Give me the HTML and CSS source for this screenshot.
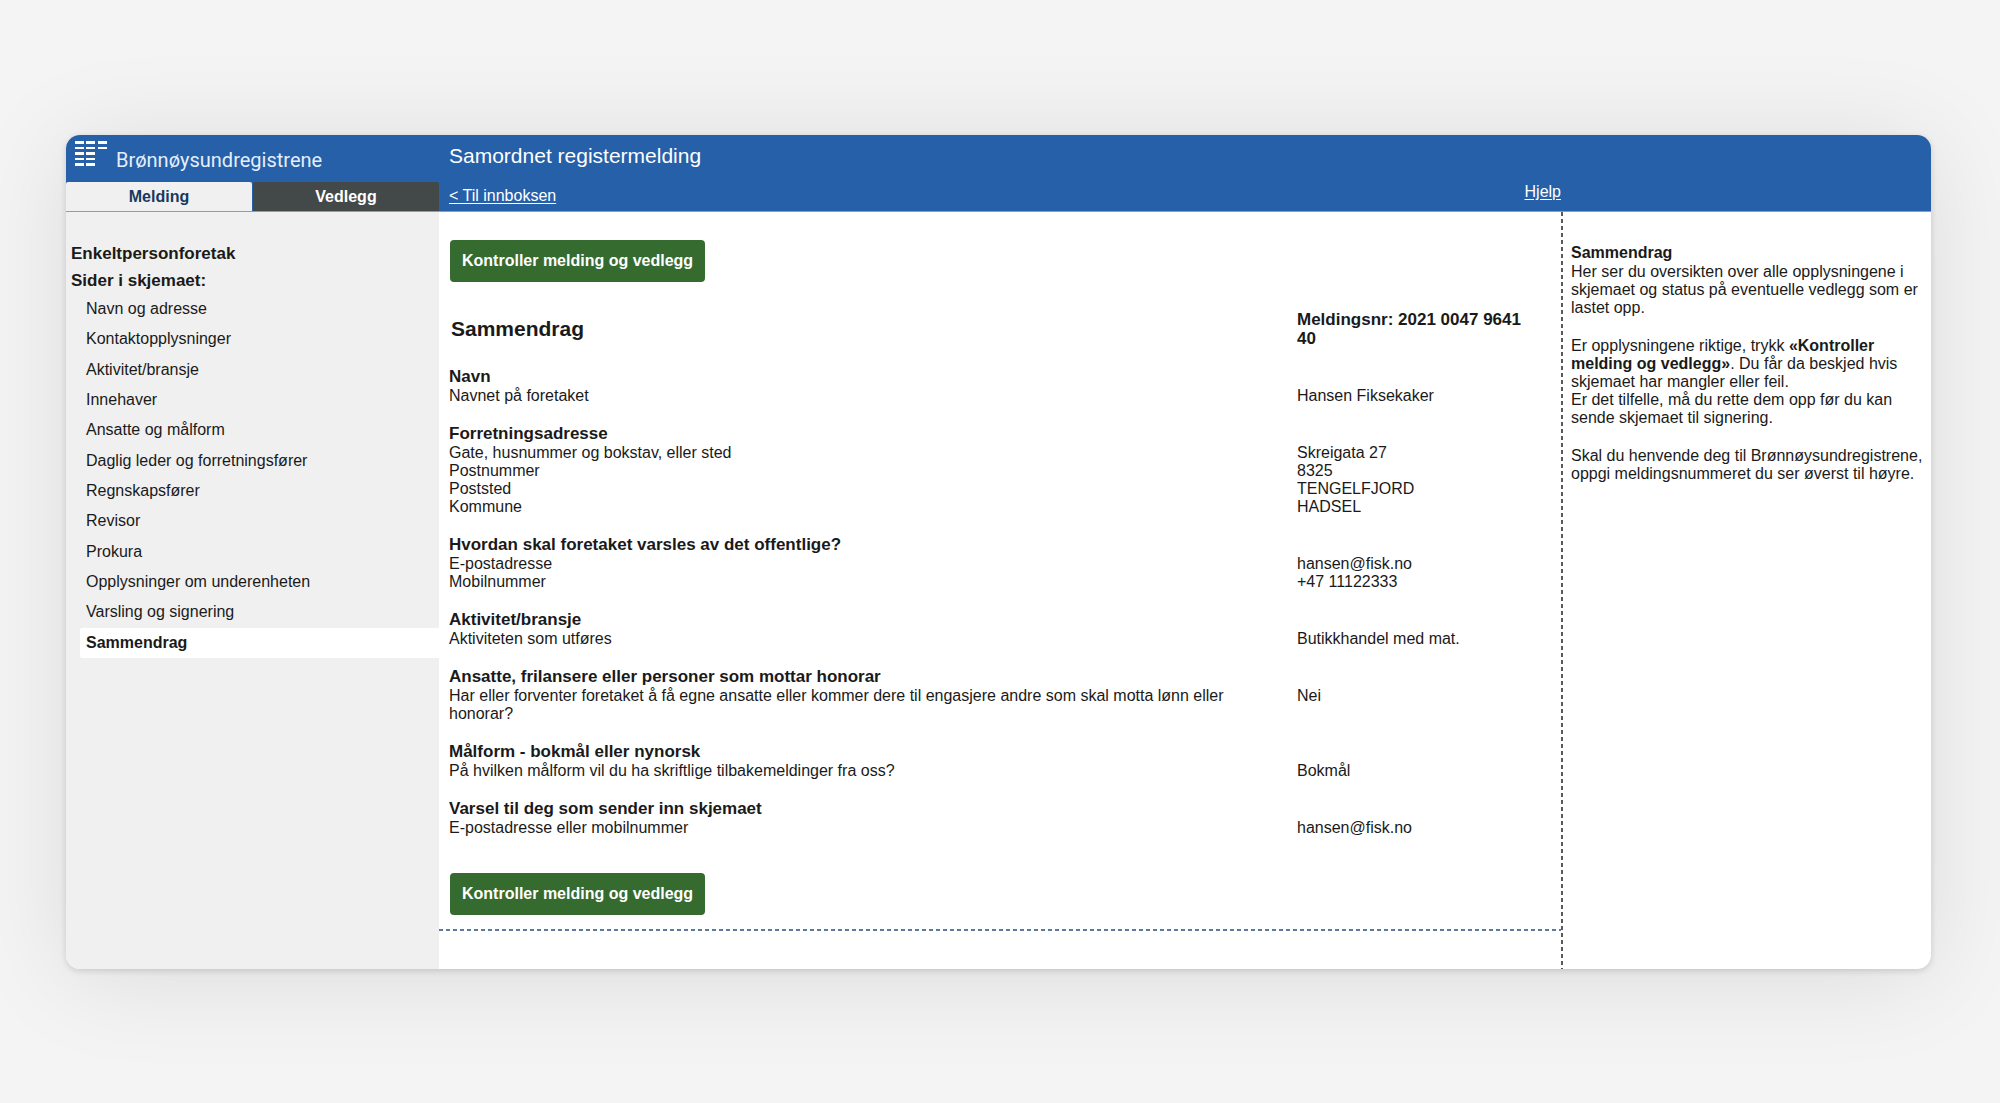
FILE: index.html
```html
<!DOCTYPE html>
<html lang="no">
<head>
    <meta charset="UTF-8">
    <meta name="viewport" content="width=device-width, initial-scale=1.0">
    <title>Samordnet registermelding</title>
    <link rel="stylesheet" href="styles.css">
</head>
<body>
    <div class="window">
        <header class="header">
            <div class="brand">
                <div class="logo">
                    <svg class="logo-mark" width="32" height="26" viewBox="0 0 32 26" fill="#fff" aria-hidden="true">
                        <path d="M0 0h9v3H0zM11 0h9v3h-9zM23 0h9v3h-9z"/>
                        <path d="M0 6h9v2H0zM11 6h9v2h-9zM23 6h9v2h-9z"/>
                        <path d="M0 11h9v3H0zM11 11h9v3h-9z"/>
                        <path d="M0 17h9v2H0zM11 17h9v2h-9z"/>
                        <path d="M0 22h9v3H0zM11 22h9v3h-9z"/>
                    </svg>
                    <span class="logo-text">Brønnøysundregistrene</span>
                </div>
                <nav class="tabs">
                    <a class="tab active" href="#melding">Melding</a>
                    <a class="tab" href="#vedlegg">Vedlegg</a>
                </nav>
            </div>
            <div class="header-main">
                <div class="form-name">Samordnet registermelding</div>
                <div class="header-links">
                    <a href="#innboks">&lt; Til innboksen</a>
                    <a class="help-link" href="#hjelp">Hjelp</a>
                </div>
            </div>
        </header>

        <div class="content">
            <nav class="sidebar">
                <h2>Enkeltpersonforetak</h2>
                <h2>Sider i skjemaet:</h2>
                <ul class="pages">
                    <li><a href="#">Navn og adresse</a></li>
                    <li><a href="#">Kontaktopplysninger</a></li>
                    <li><a href="#">Aktivitet/bransje</a></li>
                    <li><a href="#">Innehaver</a></li>
                    <li><a href="#">Ansatte og målform</a></li>
                    <li><a href="#">Daglig leder og forretningsfører</a></li>
                    <li><a href="#">Regnskapsfører</a></li>
                    <li><a href="#">Revisor</a></li>
                    <li><a href="#">Prokura</a></li>
                    <li><a href="#">Opplysninger om underenheten</a></li>
                    <li><a href="#">Varsling og signering</a></li>
                    <li class="current"><a href="#">Sammendrag</a></li>
                </ul>
            </nav>

            <main class="main">
                <div class="summary">
                    <button type="button" class="check-button">Kontroller melding og vedlegg</button>

                    <div class="title-row">
                        <h1>Sammendrag</h1>
                        <strong class="message-number">Meldingsnr: 2021 0047 9641 40</strong>
                    </div>

                    <section class="group">
                        <h3>Navn</h3>
                        <dl>
                            <dt>Navnet på foretaket</dt>
                            <dd>Hansen Fiksekaker</dd>
                        </dl>
                    </section>
                    <section class="group">
                        <h3>Forretningsadresse</h3>
                        <dl>
                            <dt>Gate, husnummer og bokstav, eller sted</dt>
                            <dd>Skreigata 27</dd>
                            <dt>Postnummer</dt>
                            <dd>8325</dd>
                            <dt>Poststed</dt>
                            <dd>TENGELFJORD</dd>
                            <dt>Kommune</dt>
                            <dd>HADSEL</dd>
                        </dl>
                    </section>
                    <section class="group">
                        <h3>Hvordan skal foretaket varsles av det offentlige?</h3>
                        <dl>
                            <dt>E-postadresse</dt>
                            <dd>hansen@fisk.no</dd>
                            <dt>Mobilnummer</dt>
                            <dd>+47 11122333</dd>
                        </dl>
                    </section>
                    <section class="group">
                        <h3>Aktivitet/bransje</h3>
                        <dl>
                            <dt>Aktiviteten som utføres</dt>
                            <dd>Butikkhandel med mat.</dd>
                        </dl>
                    </section>
                    <section class="group">
                        <h3>Ansatte, frilansere eller personer som mottar honorar</h3>
                        <dl>
                            <dt>Har eller forventer foretaket å få egne ansatte eller kommer dere til engasjere andre som skal motta lønn eller honorar?</dt>
                            <dd>Nei</dd>
                        </dl>
                    </section>
                    <section class="group">
                        <h3>Målform - bokmål eller nynorsk</h3>
                        <dl>
                            <dt>På hvilken målform vil du ha skriftlige tilbakemeldinger fra oss?</dt>
                            <dd>Bokmål</dd>
                        </dl>
                    </section>
                    <section class="group">
                        <h3>Varsel til deg som sender inn skjemaet</h3>
                        <dl>
                            <dt>E-postadresse eller mobilnummer</dt>
                            <dd>hansen@fisk.no</dd>
                        </dl>
                    </section>

                    <button type="button" class="check-button">Kontroller melding og vedlegg</button>
                </div>
            </main>

            <aside class="help">
                <h3>Sammendrag</h3>
                <p>Her ser du oversikten over alle opplysningene i skjemaet og status på eventuelle vedlegg som er lastet opp.</p>
                <p>Er opplysningene riktige, trykk <b>«Kontroller melding og vedlegg»</b>. Du får da beskjed hvis skjemaet har mangler eller feil.<br>
                Er det tilfelle, må du rette dem opp før du kan sende skjemaet til signering.</p>
                <p>Skal du henvende deg til Brønnøysundregistrene, oppgi meldingsnummeret du ser øverst til høyre.</p>
            </aside>
        </div>
    </div>
</body>
</html>
```
FILE: styles.css
```css
* {
    box-sizing: border-box;
}
body {
    margin: 0;
    padding: 135px 69px 135px 66px;
    background-color: #f4f4f4;
    color: #1a1a1a;
    font-family: "Liberation Sans", Arial, sans-serif;
    font-size: 16px;
    line-height: 18px;
}
h1, h2, h3, p, ul, dl, dd {
    margin: 0;
    padding: 0;
}
.window {
    background-color: #fff;
    border-radius: 14px;
    overflow: hidden;
    box-shadow: 0 2px 6px rgba(0, 0, 0, 0.14), 0 8px 100px rgba(0, 0, 0, 0.1);
}

/* Header */
.header {
    display: grid;
    grid-template-columns: 20% 1fr;
    background-color: #2560a9;
    border-bottom: 1px solid #7f9fc6;
    color: #fff;
}
.brand {
    display: flex;
    flex-direction: column;
    justify-content: space-between;
}
.logo {
    display: flex;
    gap: 9px;
    padding: 6px 9px 0;
}
.logo-mark {
    flex: none;
}
.logo-text {
    padding-top: 9px;
    font-family: Roboto, sans-serif;
    font-size: 20px;
    line-height: 20px;
    color: #e6eefa;
}
.tabs {
    display: grid;
    grid-template-columns: 1fr 1fr;
    column-gap: 1px;
}
.tab {
    padding: 6px 6px 5px;
    background-color: #434849;
    color: #fff;
    font-weight: bold;
    text-align: center;
    text-decoration: none;
    border-radius: 2px 2px 0 0;
}
.tab.active {
    background-color: #f0f0f0;
    color: #17395f;
}
.header-main {
    padding: 9px 370px 6px 10px;
}
.form-name {
    font-size: 21px;
    line-height: 24px;
}
.header-links {
    display: flex;
    justify-content: space-between;
    align-items: flex-start;
    padding-top: 15px;
}
.header-links a {
    color: #fff;
    text-underline-offset: 2px;
    padding-top: 4px;
}
.header-links .help-link {
    padding: 0;
}

/* Columns below the header */
.content {
    display: grid;
    grid-template-columns: 20% 1fr 370px;
}
.sidebar {
    padding: 28px 0 0 5px;
    background-color: #f0f0f0;
}
.sidebar h2 {
    font-size: 17px;
    line-height: 27px;
}
.pages {
    display: grid;
    min-height: 364px;
    padding-left: 9px;
    list-style: none;
}
.pages li {
    display: grid;
    align-items: center;
    padding-left: 6px;
}
.pages a {
    color: #1a1a1a;
    text-decoration: none;
}
.pages .current {
    background-color: #fff;
    border-radius: 2px 0 0 2px;
    font-weight: bold;
}
.main {
    padding-bottom: 38px;
}
.summary {
    padding: 28px 24px 16px 10px;
    background: repeating-linear-gradient(to right, #5b7b9b 0 4px, transparent 4px 7px) bottom / 100% 2px no-repeat;
}
.check-button {
    display: block;
    margin-left: 1px;
    padding: 12px;
    border: 0;
    border-radius: 4px;
    background-color: #356b2f;
    color: #fff;
    font-family: inherit;
    font-size: 16px;
    line-height: 18px;
    font-weight: bold;
    cursor: pointer;
}
.title-row, dl {
    display: grid;
    grid-template-columns: 1fr 240px;
    column-gap: 20px;
}
.title-row {
    align-items: center;
    padding: 28px 0 19px;
}
h1 {
    padding-left: 2px;
    font-size: 21px;
    line-height: 24px;
}
.message-number {
    font-size: 17px;
    line-height: 19px;
}
.group {
    margin-bottom: 19px;
}
h3 {
    font-size: 17px;
    line-height: 20px;
}
.group:last-of-type {
    margin-bottom: 36px;
}

/* Help text */
.help {
    padding: 31px 0 20px 10px;
    background: repeating-linear-gradient(to bottom, #5a5a5a 0 4px, transparent 4px 7px) left / 2px 100% no-repeat;
}
.help h3 {
    font-size: 16px;
}
.help p {
    margin-bottom: 20px;
}
```
